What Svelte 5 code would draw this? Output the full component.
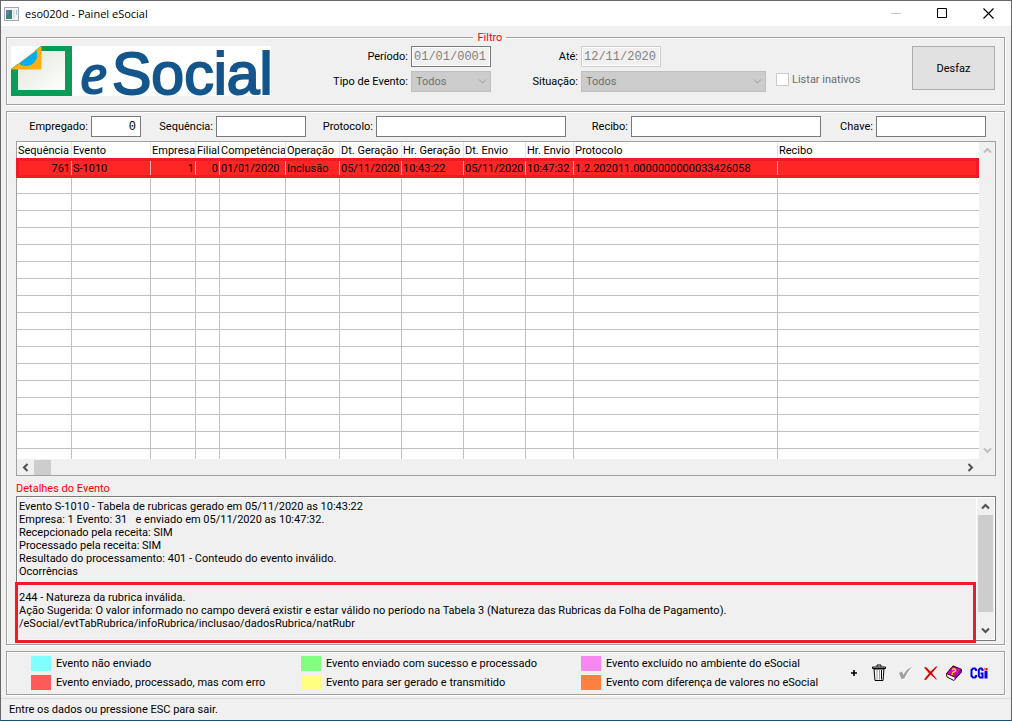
<script>
	const columns = [
		{ title: 'Sequência', width: 55, right: true },
		{ title: 'Evento', width: 79 },
		{ title: 'Empresa', width: 45, right: true },
		{ title: 'Filial', width: 24, right: true },
		{ title: 'Competência', width: 66 },
		{ title: 'Operação', width: 54 },
		{ title: 'Dt. Geração', width: 62 },
		{ title: 'Hr. Geração', width: 62 },
		{ title: 'Dt. Envio', width: 62 },
		{ title: 'Hr. Envio', width: 48 },
		{ title: 'Protocolo', width: 204 },
		{ title: 'Recibo' }
	];

	const event = [
		'761',
		'S-1010',
		'1',
		'0',
		'01/01/2020',
		'Inclusão',
		'05/11/2020',
		'10:43:22',
		'05/11/2020',
		'10:47:32',
		'1.2.202011.0000000000033426058',
		''
	];

	const emptyRows = Array.from({ length: 17 });

	const details = [
		'Evento S-1010 - Tabela de rubricas gerado em 05/11/2020 as 10:43:22',
		'Empresa: 1 Evento: 31   e enviado em 05/11/2020 as 10:47:32.',
		'Recepcionado pela receita: SIM',
		'Processado pela receita: SIM',
		'Resultado do processamento: 401 - Conteudo do evento inválido.',
		'Ocorrências',
		'',
		'244 - Natureza da rubrica inválida.',
		'Ação Sugerida: O valor informado no campo deverá existir e estar válido no período na Tabela 3 (Natureza das Rubricas da Folha de Pagamento).',
		'/eSocial/evtTabRubrica/infoRubrica/inclusao/dadosRubrica/natRubr'
	].join('\n');

	const legend = [
		{ color: '#80ffff', text: 'Evento não enviado' },
		{ color: '#80ff80', text: 'Evento enviado com sucesso e processado' },
		{ color: '#f887f1', text: 'Evento excluído no ambiente do eSocial' },
		{ color: '#ff5a5a', text: 'Evento enviado, processado, mas com erro' },
		{ color: '#ffff80', text: 'Evento para ser gerado e transmitido' },
		{ color: '#ff8040', text: 'Evento com diferença de valores no eSocial' }
	];
</script>

{#snippet arrow(dir)}
	<svg class="arrow {dir}" viewBox="0 0 9 9" width="9" height="9" aria-hidden="true">
		<path d="M1 6.5 4.5 3 8 6.5" />
	</svg>
{/snippet}

<div class="window">
	<header class="titlebar">
		<svg class="app-icon" viewBox="0 0 15 14" width="15" height="14" aria-hidden="true">
			<rect x=".5" y=".5" width="14" height="13" fill="#f4f6f8" stroke="#a5a9ad" />
			<rect x="2" y="3" width="6" height="9" fill="#3f8378" />
			<rect x="2" y="3" width="3" height="5" fill="#5b83a8" />
			<rect x="9" y="3" width="2" height="9" fill="#dfe5ea" />
			<rect x="12" y="3" width="1" height="5" fill="#9fc4dd" />
		</svg>
		<h1>eso020d - Painel eSocial</h1>
		<button aria-label="Minimizar" disabled>
			<svg viewBox="0 0 11 11" width="11" height="11"><path d="M0 5.5H10" stroke="#c8c8c8" /></svg>
		</button>
		<button aria-label="Maximizar">
			<svg viewBox="0 0 11 11" width="11" height="11">
				<path d="M.5 .5H9.500V9.500H.5Z" fill="none" stroke="#000" />
			</svg>
		</button>
		<button aria-label="Fechar">
			<svg viewBox="0 0 11 11" width="11" height="11">
				<path d="M.5 .5 10.500 10.500M10.500 .5 .5 10.500" stroke="#000" stroke-width="1.200" />
			</svg>
		</button>
	</header>

	<main>
		<fieldset class="panel filter">
			<legend>Filtro</legend>
			<svg class="logo" viewBox="0 0 260 50" width="260" height="50" role="img" aria-label="eSocial">
				<defs>
					<linearGradient id="sheet" x1="0" y1="0" x2="1" y2="1">
						<stop offset="0" stop-color="#dfe6d6" />
						<stop offset="1" stop-color="#fff" />
					</linearGradient>
				</defs>
				<rect width="260" height="50" fill="#fff" />
				<path d="M0 0H61V50H0Z" fill="#0a9b57" />
				<path d="M7 5H54V44H7Z" fill="url(#sheet)" />
				<path d="M0 0H30L0 23Z" fill="#fff" />
				<path d="M0 23.500 30.500 0V23.500Z" fill="#fbb00f" />
				<path d="M8 17.500 25.500 4.500C28 11 24 20 15 20 12 20 9.500 19 8 17.500Z" fill="#00aeef" />
				<text class="logo-e" x="68" y="48">e</text>
				<text class="logo-text" x="101" y="48">Social</text>
			</svg>

			<div class="filter-fields">
				<label for="periodo">Período:</label>
				<input id="periodo" class="date strong" value="01/01/0001" disabled />
				<label for="ate">Até:</label>
				<input id="ate" class="date" value="12/11/2020" disabled />

				<label for="tipo">Tipo de Evento:</label>
				<span class="select">
					<select id="tipo" disabled><option>Todos</option></select>
					{@render arrow('down')}
				</span>
				<label for="situacao">Situação:</label>
				<span class="select">
					<select id="situacao" disabled><option>Todos</option></select>
					{@render arrow('down')}
				</span>
				<label class="check"><input type="checkbox" disabled />Listar inativos</label>
			</div>

			<button class="undo">Desfaz</button>
		</fieldset>

		<section class="panel events">
			<div class="search">
				<label for="empregado">Empregado:</label>
				<input id="empregado" class="number" value="0" />
				<label for="sequencia">Sequência:</label>
				<input id="sequencia" />
				<label for="protocolo">Protocolo:</label>
				<input id="protocolo" />
				<label for="recibo">Recibo:</label>
				<input id="recibo" />
				<label for="chave">Chave:</label>
				<input id="chave" />
			</div>

			<div class="grid">
				<table>
					<colgroup>
						{#each columns as col}
							<col style:width={col.width ? `${col.width}px` : null} />
						{/each}
					</colgroup>
					<thead>
						<tr>
							{#each columns as col}<th>{col.title}</th>{/each}
						</tr>
					</thead>
					<tbody>
						<tr class="selected">
							{#each event as value, i}
								<td class:right={columns[i].right}>{value}</td>
							{/each}
						</tr>
						{#each emptyRows as _}
							<tr>
								{#each columns as _col}<td></td>{/each}
							</tr>
						{/each}
					</tbody>
				</table>
				<div class="vbar off">
					{@render arrow('up')}
					{@render arrow('down')}
				</div>
				<div class="hbar">
					{@render arrow('left')}
					<span class="thumb"></span>
					{@render arrow('right')}
				</div>
			</div>

			<label class="details-title" for="detalhes">Detalhes do Evento</label>
			<div class="details">
				<textarea id="detalhes" readonly value={details}></textarea>
				<div class="vbar">
					{@render arrow('up')}
					<span class="thumb"></span>
					{@render arrow('down')}
				</div>
				<div class="highlight"></div>
			</div>
		</section>

		<footer class="panel bottom">
			<ul>
				{#each legend as item}
					<li><span class="swatch" style:background={item.color}></span>{item.text}</li>
				{/each}
			</ul>
			<div class="tools">
				<button aria-label="Incluir">
					<svg viewBox="0 0 18 18" width="18" height="18">
						<path d="M6 9H12M9 6V12" stroke="#000" stroke-width="1.600" />
					</svg>
				</button>
				<button aria-label="Excluir">
					<svg viewBox="0 0 18 18" width="18" height="18">
						<path d="M4 5H14L13 16.500H5Z" fill="#fff" stroke="#000" />
						<path d="M7 6V15.500M9.500 6V15.500" stroke="#999" />
						<path d="M11.500 6V15.500" stroke="#000" />
						<path d="M2.500 4.500V3H15.500V4.500Z" fill="#ddd" stroke="#000" />
						<path d="M7 2.500V1H11V2.500" fill="none" stroke="#000" />
					</svg>
				</button>
				<button aria-label="Confirmar" disabled>
					<svg viewBox="0 0 18 18" width="18" height="18">
						<path d="M5 10 8 8.500 9.500 12C11 8.500 13.500 5.500 18 4 15 7 12.500 10.500 10.500 15.500L7.500 16Z" fill="#fff" />
						<path d="M4 9 7 7.500 8.500 11C10 7.500 12.500 4.500 17 3 14 6 11.500 9.500 9.500 14.500L6.500 15Z" fill="#a0a0a0" />
					</svg>
				</button>
				<button aria-label="Cancelar">
					<svg viewBox="0 0 18 18" width="18" height="18">
						<path d="M4 3.500 6 3 10.500 7.500 16 2.500 17.500 2.500 12 9 17 15.500H16L10.500 10.500 6 16 4 15.500 9 9.200Z" fill="#e00000" />
					</svg>
				</button>
				<button aria-label="Ajuda">
					<svg viewBox="0 0 18 18" width="18" height="18">
						<path d="M1.500 10 8 2 16.500 5.500V8L9 16.500 2 13Z" fill="#fff" stroke="#300030" />
						<path d="M1.500 9.500 8 2 16.500 5.500 9.500 13Z" fill="#d000c8" stroke="#500050" />
						<path d="M9.500 14.500 16.500 7" stroke="#800080" stroke-width="1.500" />
						<path d="M7 5.500C9 4.500 11.500 5.500 10.500 7 9.500 8 8 7.500 7.500 9M6.500 10.300H8" fill="none" stroke="#ffe000" stroke-width="1.500" />
					</svg>
				</button>
				<button aria-label="CGI">
					<svg viewBox="0 0 20 18" width="20" height="18">
						<path d="M6 7V5.500L5 4.500H3L1.500 6V12L3 13.500H5L6 12.500V11" fill="none" stroke="#0000f0" stroke-width="2" />
						<path d="M12.500 7V5.500L11.500 4.500H10L8.800 6V12L10 13.500H12.500V9.500H10.500" fill="none" stroke="#0000f0" stroke-width="2" />
						<path d="M14.500 7H17.500V14.500H14.500Z" fill="#0000f0" />
						<path d="M14.500 4H17.500V6.500H14.500Z" fill="#f00000" />
						<path d="M15 4.500H16V5.500H15Z" fill="#ffe000" />
					</svg>
				</button>
			</div>
		</footer>
	</main>

	<div class="status">Entre os dados ou pressione ESC para sair.</div>
</div>

<style>
	:global(body) {
		margin: 0;
	}
	.window {
		--line: #a0a0a0;
		--mark: #ed1c24;

		box-sizing: border-box;
		min-height: 100vh;
		display: flex;
		flex-direction: column;
		border: 1px solid #66676b;
		border-bottom-color: #1f4d6c;
		background: #f0f0f0;
		color: #000;
		font: 11px/13px Roboto, 'Liberation Sans', sans-serif;
	}
	.window *,
	.window *::after {
		box-sizing: border-box;
	}
	button,
	input,
	select,
	textarea {
		margin: 0;
		padding: 0;
		border: 0;
		border-radius: 0;
		font: inherit;
		color: inherit;
	}

	.titlebar {
		display: flex;
		align-items: center;
		height: 25px;
		padding-left: 3px;
		background: #fff;
	}
	h1 {
		flex: 1;
		margin: 0 0 0 6px;
		font: 11px/16px 'Open Sans', 'Noto Sans', sans-serif;
	}
	.titlebar button {
		width: 46px;
		height: 25px;
		display: grid;
		place-items: center;
		background: none;
	}

	main {
		flex: 1;
		display: flex;
		flex-direction: column;
		gap: 6px;
		padding: 5px 6px 3px 5px;
	}
	.panel {
		margin: 0;
		min-width: 0;
		border: 1px solid var(--line);
		box-shadow:
			1px 1px 0 #fff,
			inset 1px 1px 0 #fff;
	}

	.filter {
		display: flex;
		align-items: flex-start;
		padding: 2px 9px 8px 4px;
	}
	legend {
		margin-left: 47%;
		padding: 0 4px;
		color: #f00;
	}
	.logo {
		flex: none;
		overflow: visible;
	}
	.logo-e {
		font: italic 600 54px 'Noto Sans', sans-serif;
		fill: #14568c;
	}
	.logo-text {
		font: 59px 'Liberation Sans', sans-serif;
		fill: #14568c;
		stroke: #14568c;
		stroke-width: 2px;
	}
	.filter-fields {
		display: grid;
		grid-template-columns: 140px 80px 90px 185px auto;
		grid-auto-rows: 21px;
		gap: 4px 0;
		align-items: center;
	}
	.filter-fields label,
	.search label {
		padding-right: 3px;
		text-align: right;
		white-space: nowrap;
	}
	input {
		width: 100%;
		height: 21px;
		padding: 0 2px;
		border: 1px solid #7a7a7a;
		background: #fff;
		font: 12px/15px 'Liberation Mono', monospace;
	}
	.date {
		width: 80px;
		border-color: #ccc;
		background: #f0f0f0;
		box-shadow: inset 0 0 0 1px #fff;
		color: #808080;
	}
	.date.strong {
		border-color: #7a7a7a;
	}
	#ate {
		grid-column: 4 / -1;
	}
	.select {
		position: relative;
		color: #707070;
	}
	.select select {
		display: block;
		width: 100%;
		height: 21px;
		padding-left: 4px;
		appearance: none;
		border: 1px solid #bfbfbf;
		background: #ccc;
		opacity: 1;
	}
	.select .arrow {
		position: absolute;
		top: 6px;
		right: 4px;
		stroke: #999;
		stroke-width: 1px;
	}
	.filter-fields .check {
		display: flex;
		align-items: center;
		gap: 3px;
		padding: 0 0 4px 10px;
		color: #6d6d6d;
	}
	.check input {
		appearance: none;
		width: 13px;
		height: 13px;
		padding: 0;
		border-color: #ccc;
	}
	.undo {
		width: 83px;
		height: 44px;
		margin-left: auto;
		border: 1px solid #adadad;
		background: #e1e1e1;
	}

	.events {
		flex: 1;
		display: flex;
		flex-direction: column;
		padding: 4px 8px 3px 9px;
	}
	.search {
		display: grid;
		grid-template-columns: 75px 50fr 75px 90fr 70px 190fr 65px 190fr 55px 110fr;
		align-items: center;
		padding-right: 10px;
	}
	.number {
		padding-right: 4px;
		text-align: right;
	}

	.grid {
		display: grid;
		grid-template-columns: 1fr 16px;
		margin-top: 4px;
		border: 1px solid var(--line);
	}
	table {
		width: 100%;
		table-layout: fixed;
		border-collapse: separate;
		border-spacing: 0;
		background: #fff;
	}
	th,
	td {
		height: 17px;
		padding: 0 1px;
		overflow: hidden;
		border: solid #c0c0c0;
		border-width: 0 1px 1px 0;
		line-height: 13px;
		text-align: left;
		white-space: nowrap;
	}
	th {
		height: 18px;
		border-color: #e5e5e5;
		border-bottom-color: #fff;
		font-weight: normal;
	}
	th:last-child,
	td:last-child {
		border-right: 0;
	}
	.right {
		text-align: right;
	}
	tr:last-child td {
		height: 10px;
		border-bottom: 0;
	}
	.selected {
		position: relative;
		background: #ff2626;
	}
	.selected td:first-child::after {
		content: '';
		position: absolute;
		inset: -2px 0 -1px -1px;
		border: 3px solid var(--mark);
	}

	.arrow {
		flex: none;
		fill: none;
		stroke: #505050;
		stroke-width: 2px;
	}
	.down {
		transform: rotate(180deg);
	}
	.left {
		transform: rotate(-90deg);
	}
	.right.arrow {
		transform: rotate(90deg);
	}
	.vbar {
		display: flex;
		flex-direction: column;
		align-items: center;
		justify-content: space-between;
		padding: 4px 0;
	}
	.off .arrow {
		stroke: #bfbfbf;
	}
	.thumb {
		background: #cdcdcd;
	}
	.hbar {
		display: flex;
		align-items: center;
		height: 16px;
		padding: 0 4px;
	}
	.hbar .thumb {
		width: 17px;
		height: 15px;
		margin: 0 auto 0 4px;
	}

	.details-title {
		margin: 6px 0 1px;
		color: #f00;
	}
	.details {
		flex: 1;
		position: relative;
		display: grid;
		grid-template-columns: 1fr 18px;
		border: 1px solid #7a7a7a;
		box-shadow: inset 0 0 0 1px #fff;
	}
	textarea {
		display: block;
		width: 100%;
		min-height: 140px;
		padding: 3px 2px;
		overflow: hidden;
		resize: none;
		border-right: 1px solid #fff;
		background: none;
	}
	.details .vbar {
		padding: 5px 2px 5px 0;
	}
	.details .thumb {
		width: 15px;
		height: 97px;
		margin: 4px 0 auto;
	}
	/* frames the rejected occurrence at the end of the text */
	.highlight {
		position: absolute;
		inset: 85px 19px -3px -2px;
		border: 3px solid var(--mark);
		pointer-events: none;
	}

	.bottom {
		display: flex;
		align-items: center;
		justify-content: space-between;
		padding: 4px 14px 4px 24px;
	}
	ul {
		display: grid;
		grid-template-columns: 270px 280px auto;
		gap: 4px 0;
		margin: 0;
		padding: 0;
		list-style: none;
	}
	li {
		display: flex;
		align-items: center;
		gap: 5px;
		white-space: nowrap;
	}
	.swatch {
		width: 20px;
		height: 15px;
	}
	.tools {
		display: flex;
		gap: 7px;
	}
	.tools button {
		background: none;
	}
	.tools svg {
		display: block;
	}

	.status {
		padding: 4px 8px;
		border-top: 1px solid #d9d9d9;
	}
</style>
